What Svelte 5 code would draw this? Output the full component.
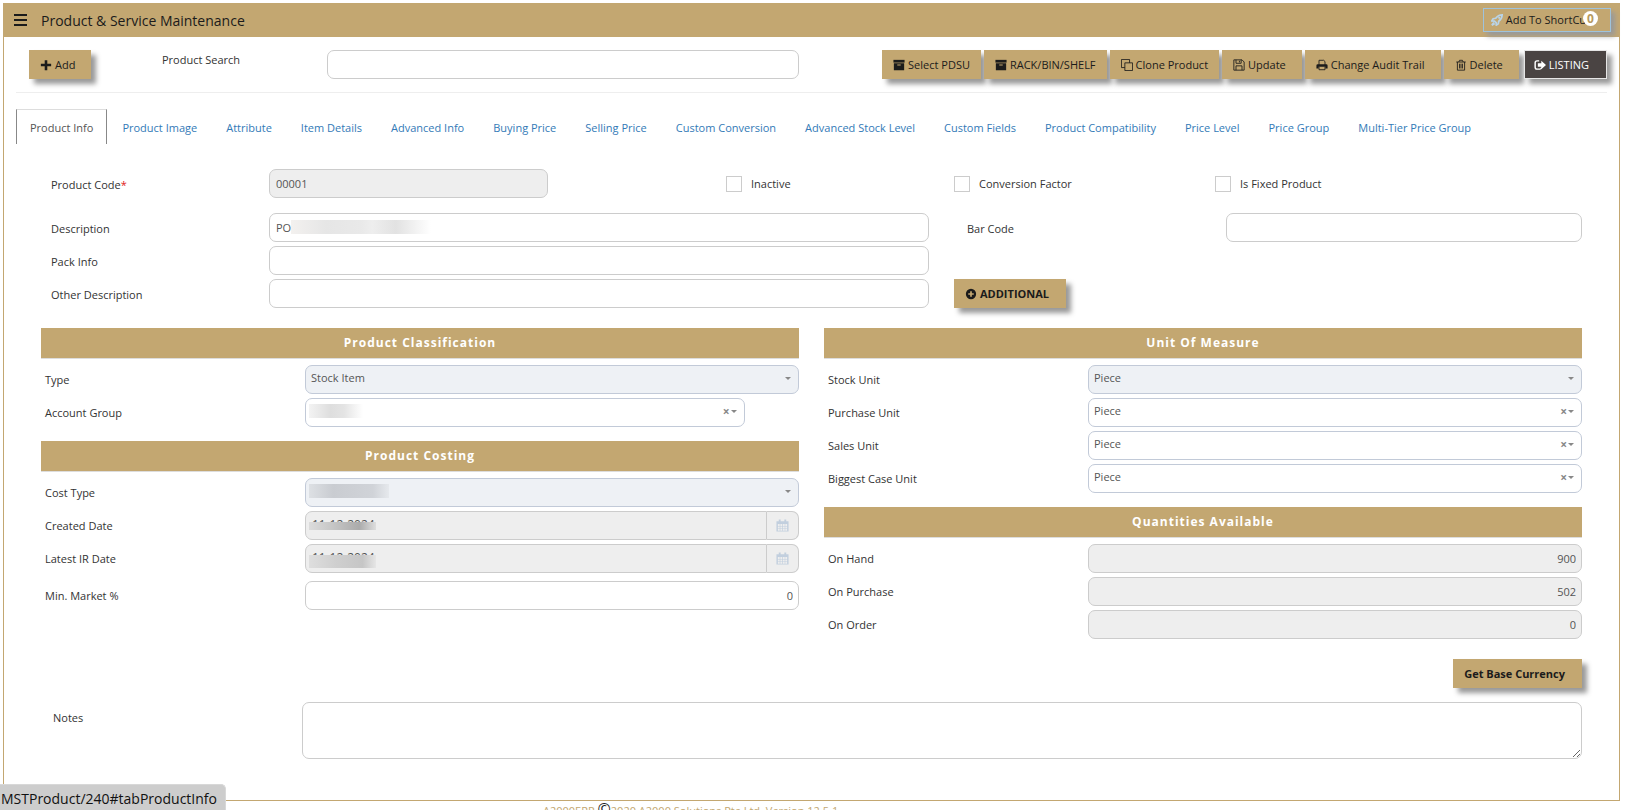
<script>
  const tabs = [
    'Product Info', 'Product Image', 'Attribute', 'Item Details', 'Advanced Info',
    'Buying Price', 'Selling Price', 'Custom Conversion', 'Advanced Stock Level',
    'Custom Fields', 'Product Compatibility', 'Price Level', 'Price Group',
    'Multi-Tier Price Group'
  ];

  const actions = [
    { icon: 'archive', text: 'Select PDSU' },
    { icon: 'archive', text: 'RACK/BIN/SHELF' },
    { icon: 'clone', text: 'Clone Product' },
    { icon: 'save', text: 'Update', wide: true },
    { icon: 'print', text: 'Change Audit Trail', wide: true },
    { icon: 'trash', text: 'Delete', wide: true }
  ];

  const units = ['Stock Unit', 'Purchase Unit', 'Sales Unit', 'Biggest Case Unit'];

  let activeTab = $state('Product Info');
  let search = $state('');
  let product = $state({
    code: '00001',
    description: 'PO',
    packInfo: '',
    otherDescription: '',
    barCode: '',
    inactive: false,
    conversionFactor: false,
    fixedProduct: false,
    createdDate: '11-12-2024',
    latestIrDate: '11-12-2024',
    minMarket: '0',
    notes: ''
  });

  const quantities = [
    { label: 'On Hand', value: '900' },
    { label: 'On Purchase', value: '502' },
    { label: 'On Order', value: '0' }
  ];

  const slug = (text) => text.toLowerCase().replace(/[^a-z]+/g, '-');
  const tabHref = (text) => '#tab' + text.replace(/[^A-Za-z]/g, '');
</script>

{#snippet icon(name)}
  <svg class="icon" viewBox="0 0 14 14" aria-hidden="true">
    {#if name === 'plus'}
      <path d="M5.5 1.500h3v4H13v3H8.500v4.500h-3V8.500H1v-3h4.500z" />
    {:else if name === 'archive'}
      <path d="M0.500 1h13v3.200h-13z" />
      <path fill-rule="evenodd" d="M1 5h12v8H1zM5 6.300v1.200h4v-1.200z" />
    {:else if name === 'clone'}
      <path class="line" d="M4.500 4.500h9v9h-9zM10 4.500v-4h-9.500v9.500h4" />
    {:else if name === 'save'}
      <path class="line" d="M1 1h9.500l2.500 2.500v9.500h-12zM3.500 1v4h6v-4M3.500 13v-5h7v5M7.500 2v2" />
    {:else if name === 'print'}
      <path class="line" d="M3.500 7V1.500h5.500l1.500 1.500V7" />
      <path fill-rule="evenodd" d="M2 6h10q1.500 0 1.500 1.500v3.500h-2.500V9H3v2H.5V7.500Q.5 6 2 6z" />
      <path class="line" d="M3.500 9v3.500h7V9" />
    {:else if name === 'trash'}
      <path class="line" d="M1.500 3.500h11M4.500 3.500l.8-2h3.400l.8 2M2.800 3.500v9.500h8.400v-9.500M5.300 5.500v5.500M7 5.500v5.500M8.700 5.500v5.500" />
    {:else if name === 'logout'}
      <path d="M6 1.500H3.500Q.5 1.500 .5 4.500v5q0 3 3 3H7q2.300 0 2.600-2.500H8q-.3 1-1 1H3.700q-1.500 0-1.500-1.500v-5q0-1.500 1.500-1.500H6z" />
      <path d="M8.500 2l5.500 5-5.500 5V9H4.500V5h4z" />
    {:else if name === 'plus-circle'}
      <path fill-rule="evenodd" d="M7 1a6 6 0 1 1 0 12A6 6 0 0 1 7 1zM6 3.800V6H3.800v2H6v2.200h2V8h2.200V6H8V3.800z" />
    {:else if name === 'calendar'}
      <path fill-rule="evenodd" d="M.5 2.500h2.500V.500h2v2h4v-2h2v2h2.500v11H.5zM2 5.500v2h2v-2zm2.700 0v2h2v-2zm2.700 0v2h2v-2zm2.600 0v2h2v-2zM2 8.100v2h2v-2zm2.700 0v2h2v-2zm2.700 0v2h2v-2zm2.600 0v2h2v-2zM2 10.700v2h2v-2zm2.700 0v2h2v-2zm2.700 0v2h2v-2zm2.600 0v2h2v-2z" />
    {:else if name === 'rocket'}
      <path class="line thick" d="M13 1c-3.200 0-5.500 1.200-7.500 4L2.500 5.500 1 8l3 .2L6 10l.2 3 2.300-1.500.5-3c2.800-2 4-4.200 4-7.500zM3.500 10l-2.500 3 3.300-2" />
      <circle cx="9.500" cy="4.500" r="1.200" />
    {/if}
  </svg>
{/snippet}

{#snippet picker(id, value, options)}
  <div class="picker" class:locked={options.locked} class:short={options.short}>
    <select {id} disabled={options.locked}>
      <option>{value}</option>
    </select>
    {#if options.hidden}
      <span class="smudge {options.hidden}"></span>
    {/if}
    <span class="marks">
      {#if !options.locked}
        <button type="button" class="clear" aria-label="Clear">×</button>
      {/if}
      <span class="caret"></span>
    </span>
  </div>
{/snippet}

<div class="frame">
  <header>
    <button type="button" class="menu" aria-label="Menu"><span></span><span></span><span></span></button>
    <h1>Product &amp; Service Maintenance</h1>
    <button type="button" class="shortcut">
      {@render icon('rocket')}Add To ShortCut
      <span class="badge">0</span>
    </button>
  </header>

  <main>
    <div class="toolbar">
      <button type="button" class="btn add">{@render icon('plus')}Add</button>
      <label for="search">Product Search</label>
      <input id="search" type="text" bind:value={search} />
      <div class="actions">
        {#each actions as action}
          <button type="button" class="btn" class:wide={action.wide}>{@render icon(action.icon)}{action.text}</button>
        {/each}
        <button type="button" class="btn dark">{@render icon('logout')}LISTING</button>
      </div>
    </div>

    <nav>
      {#each tabs as tab}
        <a href={tabHref(tab)} class:active={tab === activeTab} onclick={() => (activeTab = tab)}>{tab}</a>
      {/each}
    </nav>

    <div class="content">
      <div class="code-row">
        <label for="code">Product Code<span class="required">*</span></label>
        <input id="code" type="text" value={product.code} readonly />
        <label class="check"><input type="checkbox" bind:checked={product.inactive} />Inactive</label>
        <label class="check"><input type="checkbox" bind:checked={product.conversionFactor} />Conversion Factor</label>
        <label class="check"><input type="checkbox" bind:checked={product.fixedProduct} />Is Fixed Product</label>
      </div>

      <div class="general">
        <label for="description">Description</label>
        <div class="masked">
          <input id="description" type="text" bind:value={product.description} />
          <span class="smudge description"></span>
        </div>
        <label class="second" for="bar-code">Bar Code</label>
        <input id="bar-code" type="text" bind:value={product.barCode} />

        <label for="pack-info">Pack Info</label>
        <input id="pack-info" type="text" bind:value={product.packInfo} />

        <label for="other-description">Other Description</label>
        <input id="other-description" type="text" bind:value={product.otherDescription} />
        <div class="extra">
          <button type="button" class="btn strong">{@render icon('plus-circle')}ADDITIONAL</button>
        </div>
      </div>

      <div class="columns">
        <div class="column">
          <section>
            <h2>Product Classification</h2>
            <div class="row">
              <label for="type">Type</label>
              {@render picker('type', 'Stock Item', { locked: true })}
            </div>
            <div class="row">
              <label for="account-group">Account Group</label>
              {@render picker('account-group', '', { short: true, hidden: 'account' })}
            </div>
          </section>

          <section>
            <h2>Product Costing</h2>
            <div class="row">
              <label for="cost-type">Cost Type</label>
              {@render picker('cost-type', '', { locked: true, hidden: 'cost' })}
            </div>
            <div class="row">
              <label for="created-date">Created Date</label>
              <div class="date">
                <input id="created-date" type="text" value={product.createdDate} readonly />
                <span class="smudge day"></span>
                <button type="button" aria-label="Pick created date" disabled>{@render icon('calendar')}</button>
              </div>
            </div>
            <div class="row">
              <label for="ir-date">Latest IR Date</label>
              <div class="date">
                <input id="ir-date" type="text" value={product.latestIrDate} readonly />
                <span class="smudge day light"></span>
                <button type="button" aria-label="Pick latest IR date" disabled>{@render icon('calendar')}</button>
              </div>
            </div>
            <div class="row spaced">
              <label for="min-market">Min. Market %</label>
              <input id="min-market" class="number" type="text" bind:value={product.minMarket} />
            </div>
          </section>
        </div>

        <div class="column">
          <section>
            <h2>Unit Of Measure</h2>
            {#each units as unit, i}
              <div class="row">
                <label for={slug(unit)}>{unit}</label>
                {@render picker(slug(unit), 'Piece', { locked: i === 0 })}
              </div>
            {/each}
          </section>

          <section>
            <h2>Quantities Available</h2>
            {#each quantities as item}
              <div class="row">
                <label for={slug(item.label)}>{item.label}</label>
                <input id={slug(item.label)} class="number" type="text" value={item.value} readonly />
              </div>
            {/each}
          </section>

          <div class="currency">
            <button type="button" class="btn strong">Get Base Currency</button>
          </div>
        </div>
      </div>

      <div class="notes">
        <label for="notes">Notes</label>
        <textarea id="notes" bind:value={product.notes}></textarea>
      </div>
    </div>
  </main>
</div>

<footer>
  A2000ERP <span class="copy">©</span>2020 A2000 Solutions Pte Ltd. Version 12.5.1
</footer>

<div class="status">MSTProduct/240#tabProductInfo</div>

<style>
  :global(body) {
    margin: 0;
    overflow: hidden;
    background: #fff;
    color: #333;
    font: 11px/18px "Segoe UI", "Open Sans", sans-serif;
  }
  * {
    box-sizing: border-box;
  }
  button, input, select, textarea {
    font: inherit;
    color: #555;
    margin: 0;
  }
  .frame {
    margin: 3px 7px 0 3px;
    border: 1px solid #c3a771;
    border-top: 0;
  }

  /* title bar */
  header {
    display: flex;
    align-items: center;
    height: 34px;
    padding: 0 8px 0 10px;
    background: #c3a771;
    color: #1b1b1b;
  }
  .menu {
    display: flex;
    flex-direction: column;
    gap: 2px;
    width: 13px;
    padding: 0;
    border: 0;
    background: none;
  }
  .menu span {
    height: 2px;
    margin-bottom: 1px;
    background: #1b1b1b;
  }
  h1 {
    flex: 1;
    margin: 0 0 0 14px;
    padding-top: 1px;
    font-size: 14px;
    font-weight: 400;
  }
  .shortcut {
    position: relative;
    display: flex;
    align-items: center;
    height: 24px;
    padding: 0 20px 0 7px;
    border: 1px solid #9fc3dc;
    background: #c3a771;
    color: #1b1b1b;
    box-shadow: 4px 4px 5px #999;
  }
  .shortcut .icon {
    color: #b9d4e8;
  }
  .badge {
    position: absolute;
    top: 2px;
    right: 12px;
    width: 15px;
    height: 15px;
    border-radius: 50%;
    background: #fff;
    color: #b89a5e;
    font-size: 12px;
    font-weight: 700;
    line-height: 15px;
    text-align: center;
  }

  /* buttons */
  .icon {
    flex: none;
    width: 12px;
    height: 12px;
    margin-right: 3px;
    fill: currentColor;
  }
  .icon .line {
    fill: none;
    stroke: currentColor;
    stroke-width: 1;
  }
  .icon .thick {
    stroke-width: 2;
  }
  .btn {
    display: flex;
    align-items: center;
    height: 29px;
    padding: 0 11px;
    border: 0;
    background: #c3a771;
    color: #1b1b1b;
    box-shadow: 5px 5px 5px #999;
    white-space: nowrap;
  }
  .btn.wide {
    padding-right: 16px;
  }
  .btn.dark {
    margin-left: 2px;
    padding: 0 17px 0 9px;
    border: 1px solid #e6e6e6;
    background: #4a4443;
    color: #fff;
  }
  .btn.strong {
    padding-right: 17px;
    font-weight: 700;
  }

  main {
    padding: 13px 12px 41px;
  }
  .toolbar {
    display: flex;
    padding: 0 0 13px 13px;
    border-bottom: 1px solid #eee;
  }
  .add {
    width: 62px;
  }
  .toolbar label {
    width: 165px;
    margin-left: 71px;
    padding-top: 1px;
  }
  .toolbar > input {
    flex: 0 1 472px;
    min-width: 0;
  }
  .actions {
    display: flex;
    gap: 3px;
    margin-left: auto;
  }

  /* tabs */
  nav {
    display: flex;
    gap: 1px;
    margin-top: 16px;
  }
  nav a {
    height: 35px;
    padding: 9px 13px 0;
    border: 1px solid transparent;
    border-bottom: 0;
    color: #337ab7;
    text-decoration: none;
    white-space: nowrap;
  }
  nav a.active {
    border-color: #ddd #888 transparent;
    color: #555;
  }

  /* form controls */
  input[type="text"], select, textarea {
    display: block;
    width: 100%;
    height: 29px;
    padding: 0 6px;
    border: 1px solid #ccc;
    border-radius: 7px;
    background: #fff;
    outline: 0;
  }
  input[type="text"][readonly] {
    background: #eee;
  }
  input.number {
    padding-right: 5px;
    text-align: right;
  }
  .content {
    padding: 25px 25px 0;
  }
  .code-row {
    display: grid;
    grid-template-columns: 228fr 457fr 228fr 261fr 367fr;
    align-items: center;
    padding-bottom: 15px;
  }
  .code-row > label:first-child, .general > label {
    padding: 2px 0 0 10px;
  }
  .code-row input[type="text"] {
    width: 61%;
  }
  .required {
    color: #e02222;
  }
  .check {
    display: flex;
    align-items: center;
    gap: 9px;
  }
  .check input {
    appearance: none;
    width: 16px;
    height: 16px;
    border: 1px solid #ccc;
    background: #fff;
  }
  .check input:checked {
    background: #c3a771;
  }
  .general {
    display: grid;
    grid-template-columns: 228fr 660fr 25fr 272fr 356fr;
    row-gap: 4px;
    align-items: center;
  }
  .general > label:not(.second) {
    grid-column: 1;
  }
  .general > .second {
    grid-column: 4;
    padding-left: 13px;
  }
  .extra {
    display: flex;
    grid-column: 4;
  }

  .columns {
    display: grid;
    grid-template-columns: 1fr 1fr;
    gap: 25px;
    margin-top: 20px;
  }
  section + section {
    margin-top: 14px;
  }
  h2 {
    margin: 0 0 6px;
    border-bottom: 1px solid #ddd;
    background: #c3a771;
    color: #fff;
    font-size: 12px;
    line-height: 30px;
    letter-spacing: 1px;
    text-align: center;
  }
  .row {
    display: grid;
    grid-template-columns: 264fr 494fr;
    align-items: center;
  }
  .row + .row {
    margin-top: 4px;
  }
  .row + .spaced {
    margin-top: 8px;
  }
  .row > label {
    padding: 1px 0 0 4px;
  }

  .picker, .masked, .date {
    position: relative;
  }
  .picker.short {
    width: 89%;
  }
  select {
    appearance: none;
    padding: 0 5px 3px;
    border-color: #c2cad8;
    opacity: 1;
  }
  .locked select {
    background: #eef1f5;
  }
  .marks {
    position: absolute;
    top: 8px;
    right: 8px;
    display: flex;
    align-items: center;
    gap: 1px;
    height: 11px;
  }
  .clear {
    padding: 0;
    border: 0;
    background: none;
    color: #888;
    font-size: 12px;
    font-weight: 700;
    line-height: 11px;
  }
  .caret {
    border: 3px solid transparent;
    border-top-color: #888;
    border-bottom: 0;
  }

  .date {
    display: flex;
  }
  .date input[type="text"] {
    flex: 1;
    padding-bottom: 2px;
    border-radius: 7px 0 0 7px;
    font-size: 12px;
  }
  .date button {
    display: flex;
    align-items: center;
    justify-content: center;
    width: 32px;
    border: 1px solid #ccc;
    border-left: 0;
    border-radius: 0 7px 7px 0;
    background: #eee;
    color: #c2cfde;
  }
  .date .icon {
    width: 13px;
    height: 13px;
    margin: 0;
  }

  /* obscured values */
  .smudge {
    position: absolute;
    top: 6px;
    left: 4px;
    height: 14px;
  }
  .smudge.description {
    top: 7px;
    left: 22px;
    width: 140px;
    background: linear-gradient(90deg, #f3f1ef, #e6e6e6 25%, #e9e9e9 50%, #eee 58%, #e2e2e2 75%, #fff);
  }
  .smudge.account {
    width: 54px;
    background: linear-gradient(90deg, #f3f3f3, #dedede 40%, #e4e4e4 65%, #fff);
  }
  .smudge.cost {
    width: 80px;
    background: linear-gradient(90deg, #dde0e4, #c9ccd1 30%, #d0d3d8 80%, #e6e9ed);
  }
  .smudge.day {
    top: 11px;
    width: 67px;
    height: 8px;
    background: linear-gradient(90deg, #dcdcdc, #c6c6c6 35%, #ababab 75%, #dedede);
  }
  .smudge.light {
    height: 13px;
    background: linear-gradient(90deg, #dedede, #cfcfcf 40%, #c6c6c6 80%, #e6e6e6);
  }

  .currency {
    display: flex;
    justify-content: flex-end;
    margin-top: 20px;
  }
  .notes {
    display: grid;
    grid-template-columns: 261fr 1280fr;
    margin-top: 14px;
  }
  .notes label {
    padding: 7px 0 0 12px;
  }
  textarea {
    height: 57px;
    resize: both;
  }

  footer {
    margin-left: 543px;
    color: #c3a771;
    line-height: 16px;
    white-space: nowrap;
  }
  .copy {
    color: #1b1b1b;
    font-size: 16px;
  }
  .status {
    position: fixed;
    bottom: 0;
    left: 0;
    height: 26px;
    padding: 0 8px 0 1px;
    border: 1px solid #d8d8d8;
    border-width: 1px 1px 0 0;
    border-radius: 0 5px 0 0;
    background: #cdcdcd;
    color: #111;
    font-size: 14px;
    line-height: 27px;
  }
</style>
